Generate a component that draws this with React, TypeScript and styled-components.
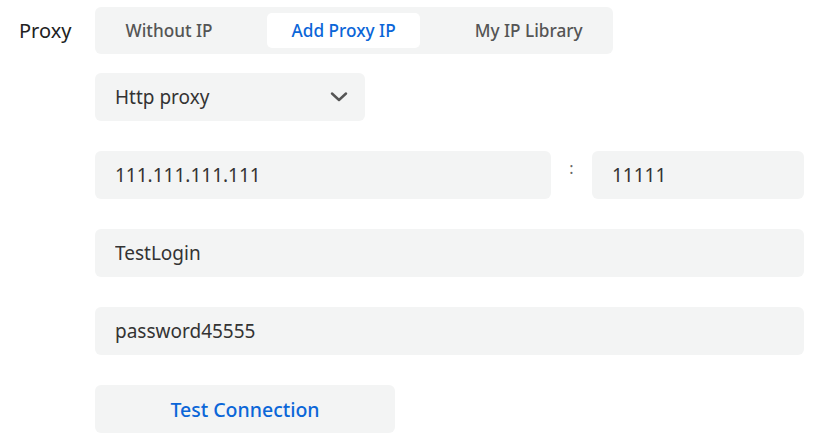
import React, { useState } from 'react';
import styled, { createGlobalStyle } from 'styled-components';

const GlobalStyle = createGlobalStyle`
  html, body {
    margin: 0;
    padding: 0;
    background: #ffffff;
    font-family: "Noto Sans", "Open Sans", sans-serif;
  }
`;

const FIELD_BG = '#f3f4f4';
const BLUE = '#0b66d8';

const tabs = ['Without IP', 'Add Proxy IP', 'My IP Library'];

export default function App() {
  const [active, setActive] = useState(1);

  return <>
    <GlobalStyle />
    <Form>
      <Label>Proxy</Label>
      <Fields>
        <TabGroup>
          {tabs.map((t, i) =>
            <Tab key={t} isActive={i === active} onClick={() => setActive(i)}>{t}</Tab>
          )}
        </TabGroup>

        <Select>
          <span>Http proxy</span>
          <svg width="18" height="10" viewBox="0 0 18 10">
            <path d="M2 1.5 L9 8 L16 1.5" fill="none" stroke="#555" strokeWidth="2.4" strokeLinecap="round" strokeLinejoin="round" />
          </svg>
        </Select>

        <HostRow>
          <Input defaultValue="111.111.111.111" />
          <Colon>:</Colon>
          <Input defaultValue="11111" />
        </HostRow>

        <Input defaultValue="TestLogin" />
        <Input defaultValue="password45555" />

        <TestButton>Test Connection</TestButton>
      </Fields>
    </Form>
  </>
}

const Form = styled.div`
  display: grid;
  grid-template-columns: 95px 709px;
  padding-top: 7px;
`;

const Label = styled.div`
  padding-left: 19px;
  height: 47px;
  line-height: 47px;
  font-size: 20px;
  color: #222;
`;

const Fields = styled.div`
  display: flex;
  flex-direction: column;
  align-items: flex-start;
  gap: 30px;
`;

const TabGroup = styled.div`
  display: flex;
  gap: 30px;
  padding: 6px;
  background: ${FIELD_BG};
  border-radius: 6px;
  margin-bottom: -11px;
`;

const Tab = styled.button<{ isActive: boolean }>`
  height: 35px;
  padding: 0 24.5px;
  border: none;
  border-radius: 5px;
  font-family: inherit;
  font-size: 17.2px;
  font-weight: 500;
  cursor: pointer;
  background: ${p => p.isActive ? '#fff' : 'transparent'};
  color: ${p => p.isActive ? BLUE : '#555'};
`;

const Select = styled.div`
  box-sizing: border-box;
  width: 270px;
  height: 48px;
  padding: 0 17px 0 20px;
  display: flex;
  align-items: center;
  justify-content: space-between;
  background: ${FIELD_BG};
  border-radius: 6px;
  font-size: 19px;
  color: #333;
`;

const HostRow = styled.div`
  display: grid;
  grid-template-columns: 456px 41px 212px;
  width: 709px;
`;

const Colon = styled.div`
  text-align: center;
  font-size: 16px;
  color: #666;
  line-height: 34px;
`;

const Input = styled.input`
  box-sizing: border-box;
  width: 100%;
  height: 48px;
  padding: 0 20px;
  border: none;
  outline: none;
  border-radius: 6px;
  background: ${FIELD_BG};
  font-family: inherit;
  font-size: 19px;
  color: #333;
`;

const TestButton = styled.button`
  width: 300px;
  height: 48px;
  border: none;
  border-radius: 6px;
  background: ${FIELD_BG};
  font-family: inherit;
  font-size: 19.5px;
  font-weight: 500;
  color: ${BLUE};
  cursor: pointer;
`;
